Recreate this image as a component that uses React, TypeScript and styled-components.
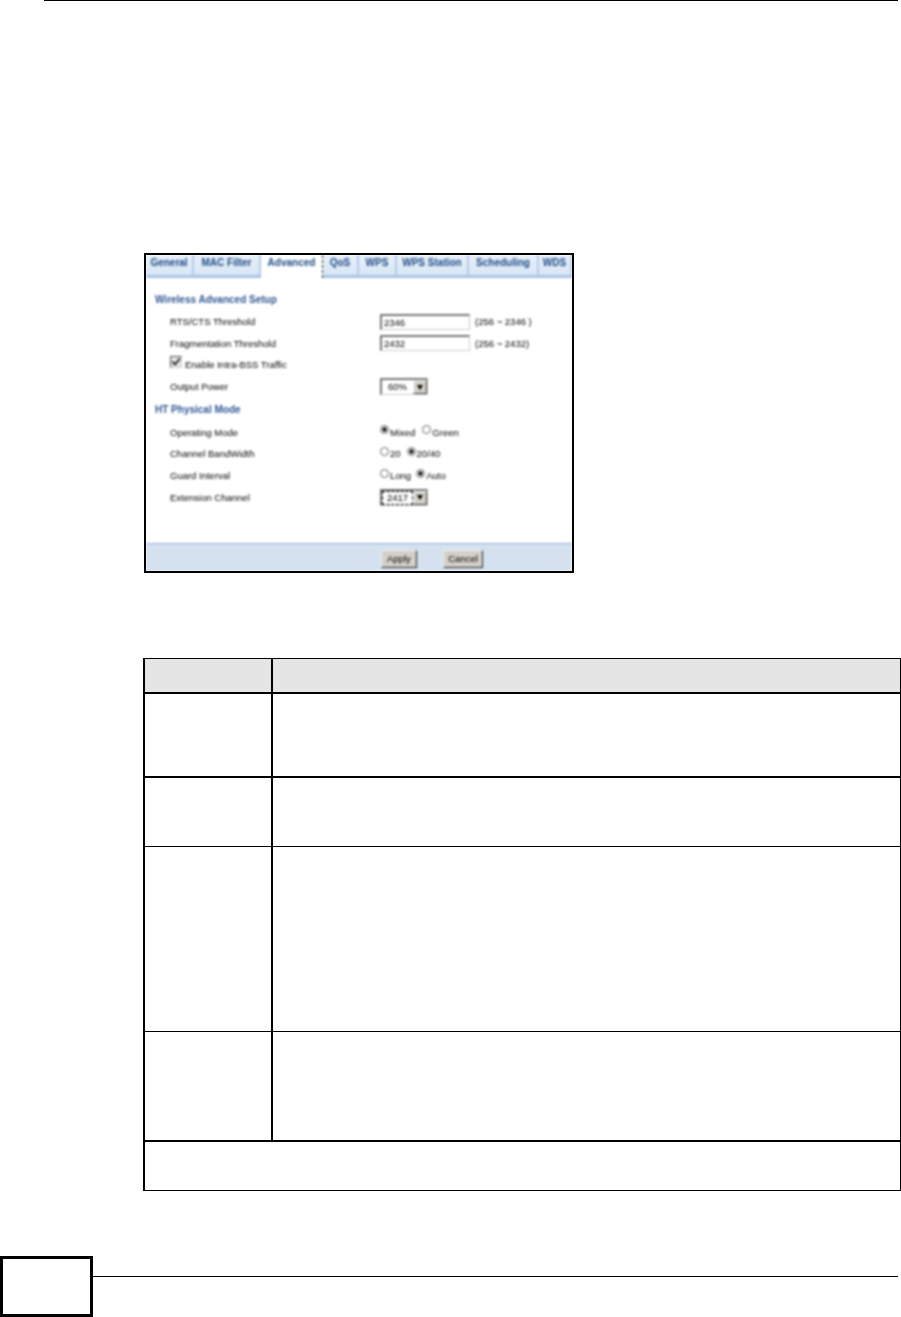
import React from "react";
import styled, { createGlobalStyle } from "styled-components";

const Global = createGlobalStyle`
  html, body { margin: 0; padding: 0; background: #fff; }
  body { font-family: "Liberation Sans", Arial, sans-serif; }
`;

const Page = styled.div`
  width: 901px;
  height: 1317px;
  display: flex;
  flex-direction: column;
  overflow: hidden;
  background: #fff;
`;

const TopRule = styled.div`
  height: 1px;
  margin: 0 3px 0 44px;
  background: #000;
`;

const Panel = styled.section`
  width: 430px;
  height: 320px;
  box-sizing: border-box;
  margin: 252px 0 0 144px;
  border: 2px solid #000;
  display: flex;
  flex-direction: column;
  background: #fff;
  overflow: hidden;
`;

const Soft = styled.div`
  flex: 1;
  display: flex;
  flex-direction: column;
  filter: blur(0.9px);
  min-height: 0;
`;

const TabBar = styled.div`
  height: 20px;
  display: flex;
  background: linear-gradient(#e9f0f9, #d9e6f5);
  border-bottom: 3px solid #a9c4e6;
`;

const Tab = styled.div<{ $w: number; $active?: boolean }>`
  width: ${(p) => p.$w}px;
  box-sizing: border-box;
  flex: none;
  font-size: 10px;
  font-weight: bold;
  line-height: 15px;
  text-align: center;
  white-space: nowrap;
  color: #1d4a86;
  background: ${(p) => (p.$active ? "#fff" : "transparent")};
  margin-bottom: ${(p) => (p.$active ? "-3px" : "0")};
  border-right: ${(p) => (p.$active ? "1px dashed #222" : "2px solid #b4cbe8")};
`;

const Body = styled.div`
  flex: 1;
  padding: 11px 0 0 9px;
  display: flex;
  flex-direction: column;
`;

const SectionTitle = styled.div<{ $h: number }>`
  height: ${(p) => p.$h}px;
  font-size: 10px;
  font-weight: bold;
  line-height: ${(p) => p.$h + 1}px;
  color: #2d5590;
  white-space: nowrap;
`;

const Row = styled.div`
  height: 21.7px;
  display: grid;
  grid-template-columns: 210px 1fr;
  padding-left: 15px;
  align-items: center;
  font-size: 9.5px;
  color: #000;
  white-space: nowrap;
`;

const Controls = styled.div`
  display: flex;
  align-items: center;
  gap: 2px;
`;

const CheckLabel = styled.div`
  display: flex;
  align-items: center;
  gap: 3px;
`;

const Box = styled.span`
  width: 12px;
  height: 12px;
  box-sizing: border-box;
  margin-top: -5px;
  border: 1px solid #555;
  border-right-color: #ccc;
  border-bottom-color: #ccc;
  background: #e4e4e4;
  display: flex;
  align-items: center;
  justify-content: center;
`;

const TextInput = styled.div`
  width: 90px;
  height: 16px;
  box-sizing: border-box;
  margin-right: 3px;
  padding-left: 2px;
  border: 1px solid #ccc;
  border-top: 2px solid #777;
  border-left: 2px solid #777;
  line-height: 13px;
  font-size: 9.5px;
  color: #000;
`;

const Select = styled.div`
  width: 48px;
  height: 17px;
  box-sizing: border-box;
  display: flex;
  justify-content: flex-end;
  border: 1px solid #ccc;
  border-top: 2px solid #777;
  border-left: 2px solid #777;
  font-size: 9.5px;
  line-height: 14px;
  color: #000;
`;

const SelectValue = styled.span<{ $focus?: boolean }>`
  flex: 1;
  text-align: center;
  outline: ${(p) => (p.$focus ? "1.5px dashed #000" : "none")};
  outline-offset: -1px;
`;

const Arrow = styled.span`
  width: 14px;
  flex: none;
  box-sizing: border-box;
  background: #d4d0c8;
  border: 1px solid;
  border-color: #fff #444 #444 #fff;
  display: flex;
  align-items: center;
  justify-content: center;
  &::after {
    content: "";
    border: 3.5px solid transparent;
    border-top: 5px solid #000;
    border-bottom: 0;
  }
`;

const Radio = styled.span<{ $on?: boolean }>`
  width: 9px;
  height: 9px;
  box-sizing: border-box;
  flex: none;
  margin-top: -5px;
  border-radius: 50%;
  border: 1px solid #666;
  background: ${(p) => (p.$on ? "radial-gradient(circle, #222 0 2px, #fff 2.5px)" : "#fff")};
`;

const RadioText = styled.span<{ $gap: number }>`
  margin-left: -1px;
  margin-right: ${(p) => p.$gap}px;
`;

const ActionBar = styled.div`
  height: 24px;
  flex: none;
  display: flex;
  align-items: flex-end;
  padding: 0 0 3px 235px;
  gap: 26px;
  background: #d5e1ef;
  border-top: 1px solid #8fb2df;
`;

const Button = styled.div<{ $w: number }>`
  width: ${(p) => p.$w}px;
  height: 18px;
  box-sizing: border-box;
  background: #d4d0c8;
  border: 1px solid;
  border-color: #eee #222 #222 #eee;
  font-size: 9.5px;
  line-height: 16px;
  text-align: center;
  color: #000;
`;

const Table = styled.div`
  width: 758px;
  box-sizing: border-box;
  margin: 85px 0 0 143px;
  border: solid #000;
  border-width: 1px 1px 0 2px;
`;

const TRow = styled.div<{ $h: number; $rule: number; $head?: boolean }>`
  height: ${(p) => p.$h}px;
  display: flex;
  box-sizing: border-box;
  border-bottom: ${(p) => p.$rule}px solid #000;
  background: ${(p) => (p.$head ? "#e5e5e5" : "#fff")};
`;

const LabelCell = styled.div`
  width: 126px;
  flex: none;
  border-right: 2px solid #000;
`;

const Footer = styled.div`
  margin-top: 65px;
  display: flex;
  align-items: flex-start;
`;

const PageBox = styled.div`
  width: 93px;
  height: 61px;
  flex: none;
  box-sizing: border-box;
  border: 3px solid #000;
`;

const FooterRule = styled.div`
  width: 805px;
  height: 1px;
  margin-top: 20px;
  background: #000;
`;

const tabs: [string, number, boolean?][] = [
  ["General", 48],
  ["MAC Filter", 67],
  ["Advanced", 62, true],
  ["QoS", 36],
  ["WPS", 38],
  ["WPS Station", 72],
  ["Scheduling", 70],
  ["WDS", 33],
];

const rows: [number, number, boolean?][] = [
  [35, 2, true],
  [84, 2],
  [69, 1],
  [185, 1],
  [110, 2],
];

export default function App() {
  return (
    <Page>
      <Global />
      <TopRule />
      <Panel>
        <Soft>
          <TabBar>
            {tabs.map(([name, w, active]) => (
              <Tab key={name} $w={w} $active={active}>{name}</Tab>
            ))}
          </TabBar>
          <Body>
            <SectionTitle $h={21.7}>Wireless Advanced Setup</SectionTitle>
            <Row>
              <span>RTS/CTS Threshold</span>
              <Controls><TextInput>2346</TextInput><span>(256 ~ 2346 )</span></Controls>
            </Row>
            <Row>
              <span>Fragmentation Threshold</span>
              <Controls><TextInput>2432</TextInput><span>(256 ~ 2432)</span></Controls>
            </Row>
            <Row>
              <CheckLabel>
                <Box>
                  <svg width="10" height="10" viewBox="0 0 10 10"><path d="M1.5 4.5l2.5 3L9 1.5" fill="none" stroke="#111" strokeWidth="1.6" /></svg>
                </Box>
                <span>Enable Intra-BSS Traffic</span>
              </CheckLabel>
            </Row>
            <Row>
              <span>Output Power</span>
              <Controls><Select><SelectValue>60%</SelectValue><Arrow /></Select></Controls>
            </Row>
            <SectionTitle $h={24}>HT Physical Mode</SectionTitle>
            <Row>
              <span>Operating Mode</span>
              <Controls>
                <Radio $on /><RadioText $gap={5}>Mixed</RadioText>
                <Radio /><RadioText $gap={0}>Green</RadioText>
              </Controls>
            </Row>
            <Row>
              <span>Channel BandWidth</span>
              <Controls>
                <Radio /><RadioText $gap={4}>20</RadioText>
                <Radio $on /><RadioText $gap={0}>20/40</RadioText>
              </Controls>
            </Row>
            <Row>
              <span>Guard Interval</span>
              <Controls>
                <Radio /><RadioText $gap={3}>Long</RadioText>
                <Radio $on /><RadioText $gap={0}>Auto</RadioText>
              </Controls>
            </Row>
            <Row>
              <span>Extension Channel</span>
              <Controls><Select><SelectValue $focus>2417</SelectValue><Arrow /></Select></Controls>
            </Row>
          </Body>
          <ActionBar>
            <Button $w={36}>Apply</Button>
            <Button $w={40}>Cancel</Button>
          </ActionBar>
        </Soft>
      </Panel>
      <Table>
        {rows.map(([h, rule, head], i) => (
          <TRow key={i} $h={h} $rule={rule} $head={head}>
            <LabelCell />
          </TRow>
        ))}
        <TRow $h={49} $rule={1} />
      </Table>
      <Footer>
        <PageBox />
        <FooterRule />
      </Footer>
    </Page>
  );
}
